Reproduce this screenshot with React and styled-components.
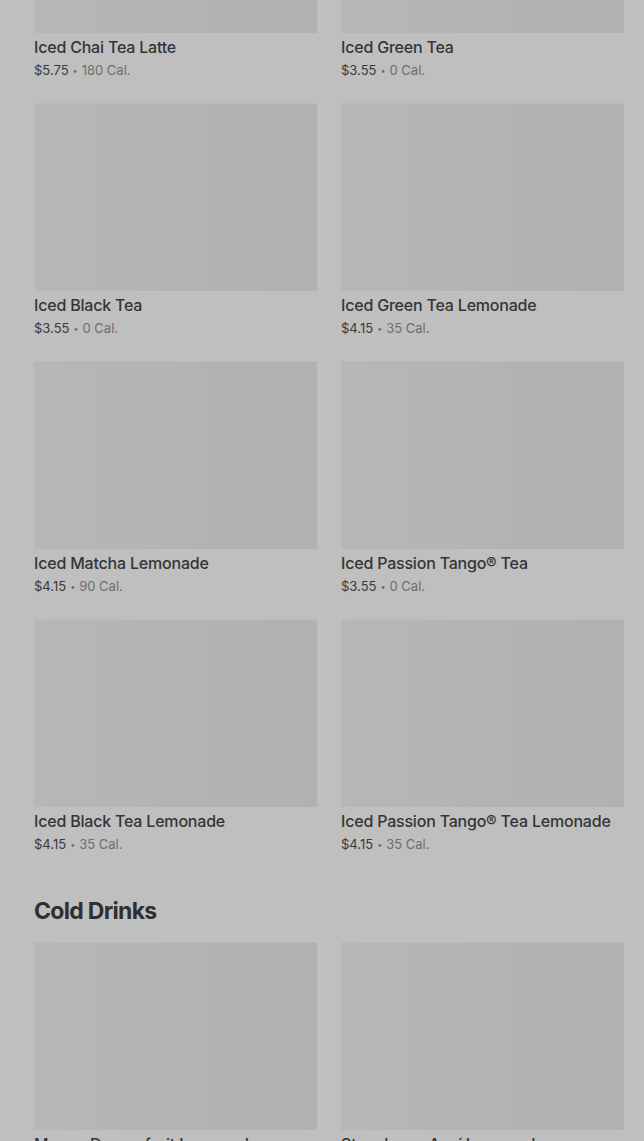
import React from "react";
import styled, { createGlobalStyle } from "styled-components";

const GlobalStyle = createGlobalStyle`
  html, body {
    margin: 0;
    padding: 0;
    background: #bfbfbf;
    overflow: hidden;
  }
  body {
    font-family: Inter, "Liberation Sans", Arial, sans-serif;
    -webkit-font-smoothing: antialiased;
  }
`;

const Page = styled.div`
  width: 644px;
  height: 1141px;
  overflow: hidden;
  background: #bfbfbf;
`;

// list is scrolled: the first row of thumbnails sits partly above the top edge
const Menu = styled.div`
  margin-top: -155px;
  padding: 0 20px 0 34px;
`;

const Section = styled.section`
  & + & {
    margin-top: 42px;
  }
`;

const Heading = styled.h2`
  margin: 0 0 15px;
  font-size: 23px;
  line-height: 32px;
  font-weight: 700;
  letter-spacing: -0.7px;
  color: #2f2f2f;
`;

const Grid = styled.div`
  display: grid;
  grid-template-columns: repeat(2, 283px);
  column-gap: 24px;
  row-gap: 24px;
`;

const Card = styled.div`
  display: flex;
  flex-direction: column;
`;

const Thumb = styled.div`
  height: 188px;
  background: linear-gradient(90deg, #b7b7b7 0%, #b4b4b4 40%, #b1b1b1 100%);
  border-top: 1px solid #b9b9b9;
  box-sizing: border-box;
`;

const Name = styled.div`
  margin-top: 4px;
  font-size: 16px;
  line-height: 20px;
  height: 20px;
  font-weight: 500;
  letter-spacing: -0.2px;
  color: #353535;
  white-space: nowrap;
`;

const Meta = styled.div`
  margin-top: 4px;
  height: 18px;
  font-size: 13px;
  line-height: 18px;
  color: #6e6e6e;
  white-space: nowrap;
`;

const Price = styled.span`
  color: #3a3a3a;
`;

const Dot = styled.span`
  margin: 0 4px;
  font-size: 9px;
  line-height: 0;
  vertical-align: 1px;
`;

const sections = [
  {
    title: null,
    items: [
      { name: "Iced Chai Tea Latte", price: "$5.75", cal: "180 Cal." },
      { name: "Iced Green Tea", price: "$3.55", cal: "0 Cal." },
      { name: "Iced Black Tea", price: "$3.55", cal: "0 Cal." },
      { name: "Iced Green Tea Lemonade", price: "$4.15", cal: "35 Cal." },
      { name: "Iced Matcha Lemonade", price: "$4.15", cal: "90 Cal." },
      { name: "Iced Passion Tango® Tea", price: "$3.55", cal: "0 Cal." },
      { name: "Iced Black Tea Lemonade", price: "$4.15", cal: "35 Cal." },
      { name: "Iced Passion Tango® Tea Lemonade", price: "$4.15", cal: "35 Cal." },
    ],
  },
  {
    title: "Cold Drinks",
    items: [
      { name: "Mango Dragonfruit Lemonade", price: "$4.45", cal: "140 Cal." },
      { name: "Strawberry Açaí Lemonade", price: "$4.45", cal: "140 Cal." },
    ],
  },
];

function Item({ item }) {
  return (
    <Card>
      <Thumb />
      <Name>{item.name}</Name>
      <Meta>
        <Price>{item.price}</Price>
        <Dot>•</Dot>
        {item.cal}
      </Meta>
    </Card>
  );
}

export default function App() {
  return (
    <Page>
      <GlobalStyle />
      <Menu>
        {sections.map((s, i) => (
          <Section key={i}>
            {s.title && <Heading>{s.title}</Heading>}
            <Grid>
              {s.items.map((it) => (
                <Item key={it.name} item={it} />
              ))}
            </Grid>
          </Section>
        ))}
      </Menu>
    </Page>
  );
}
